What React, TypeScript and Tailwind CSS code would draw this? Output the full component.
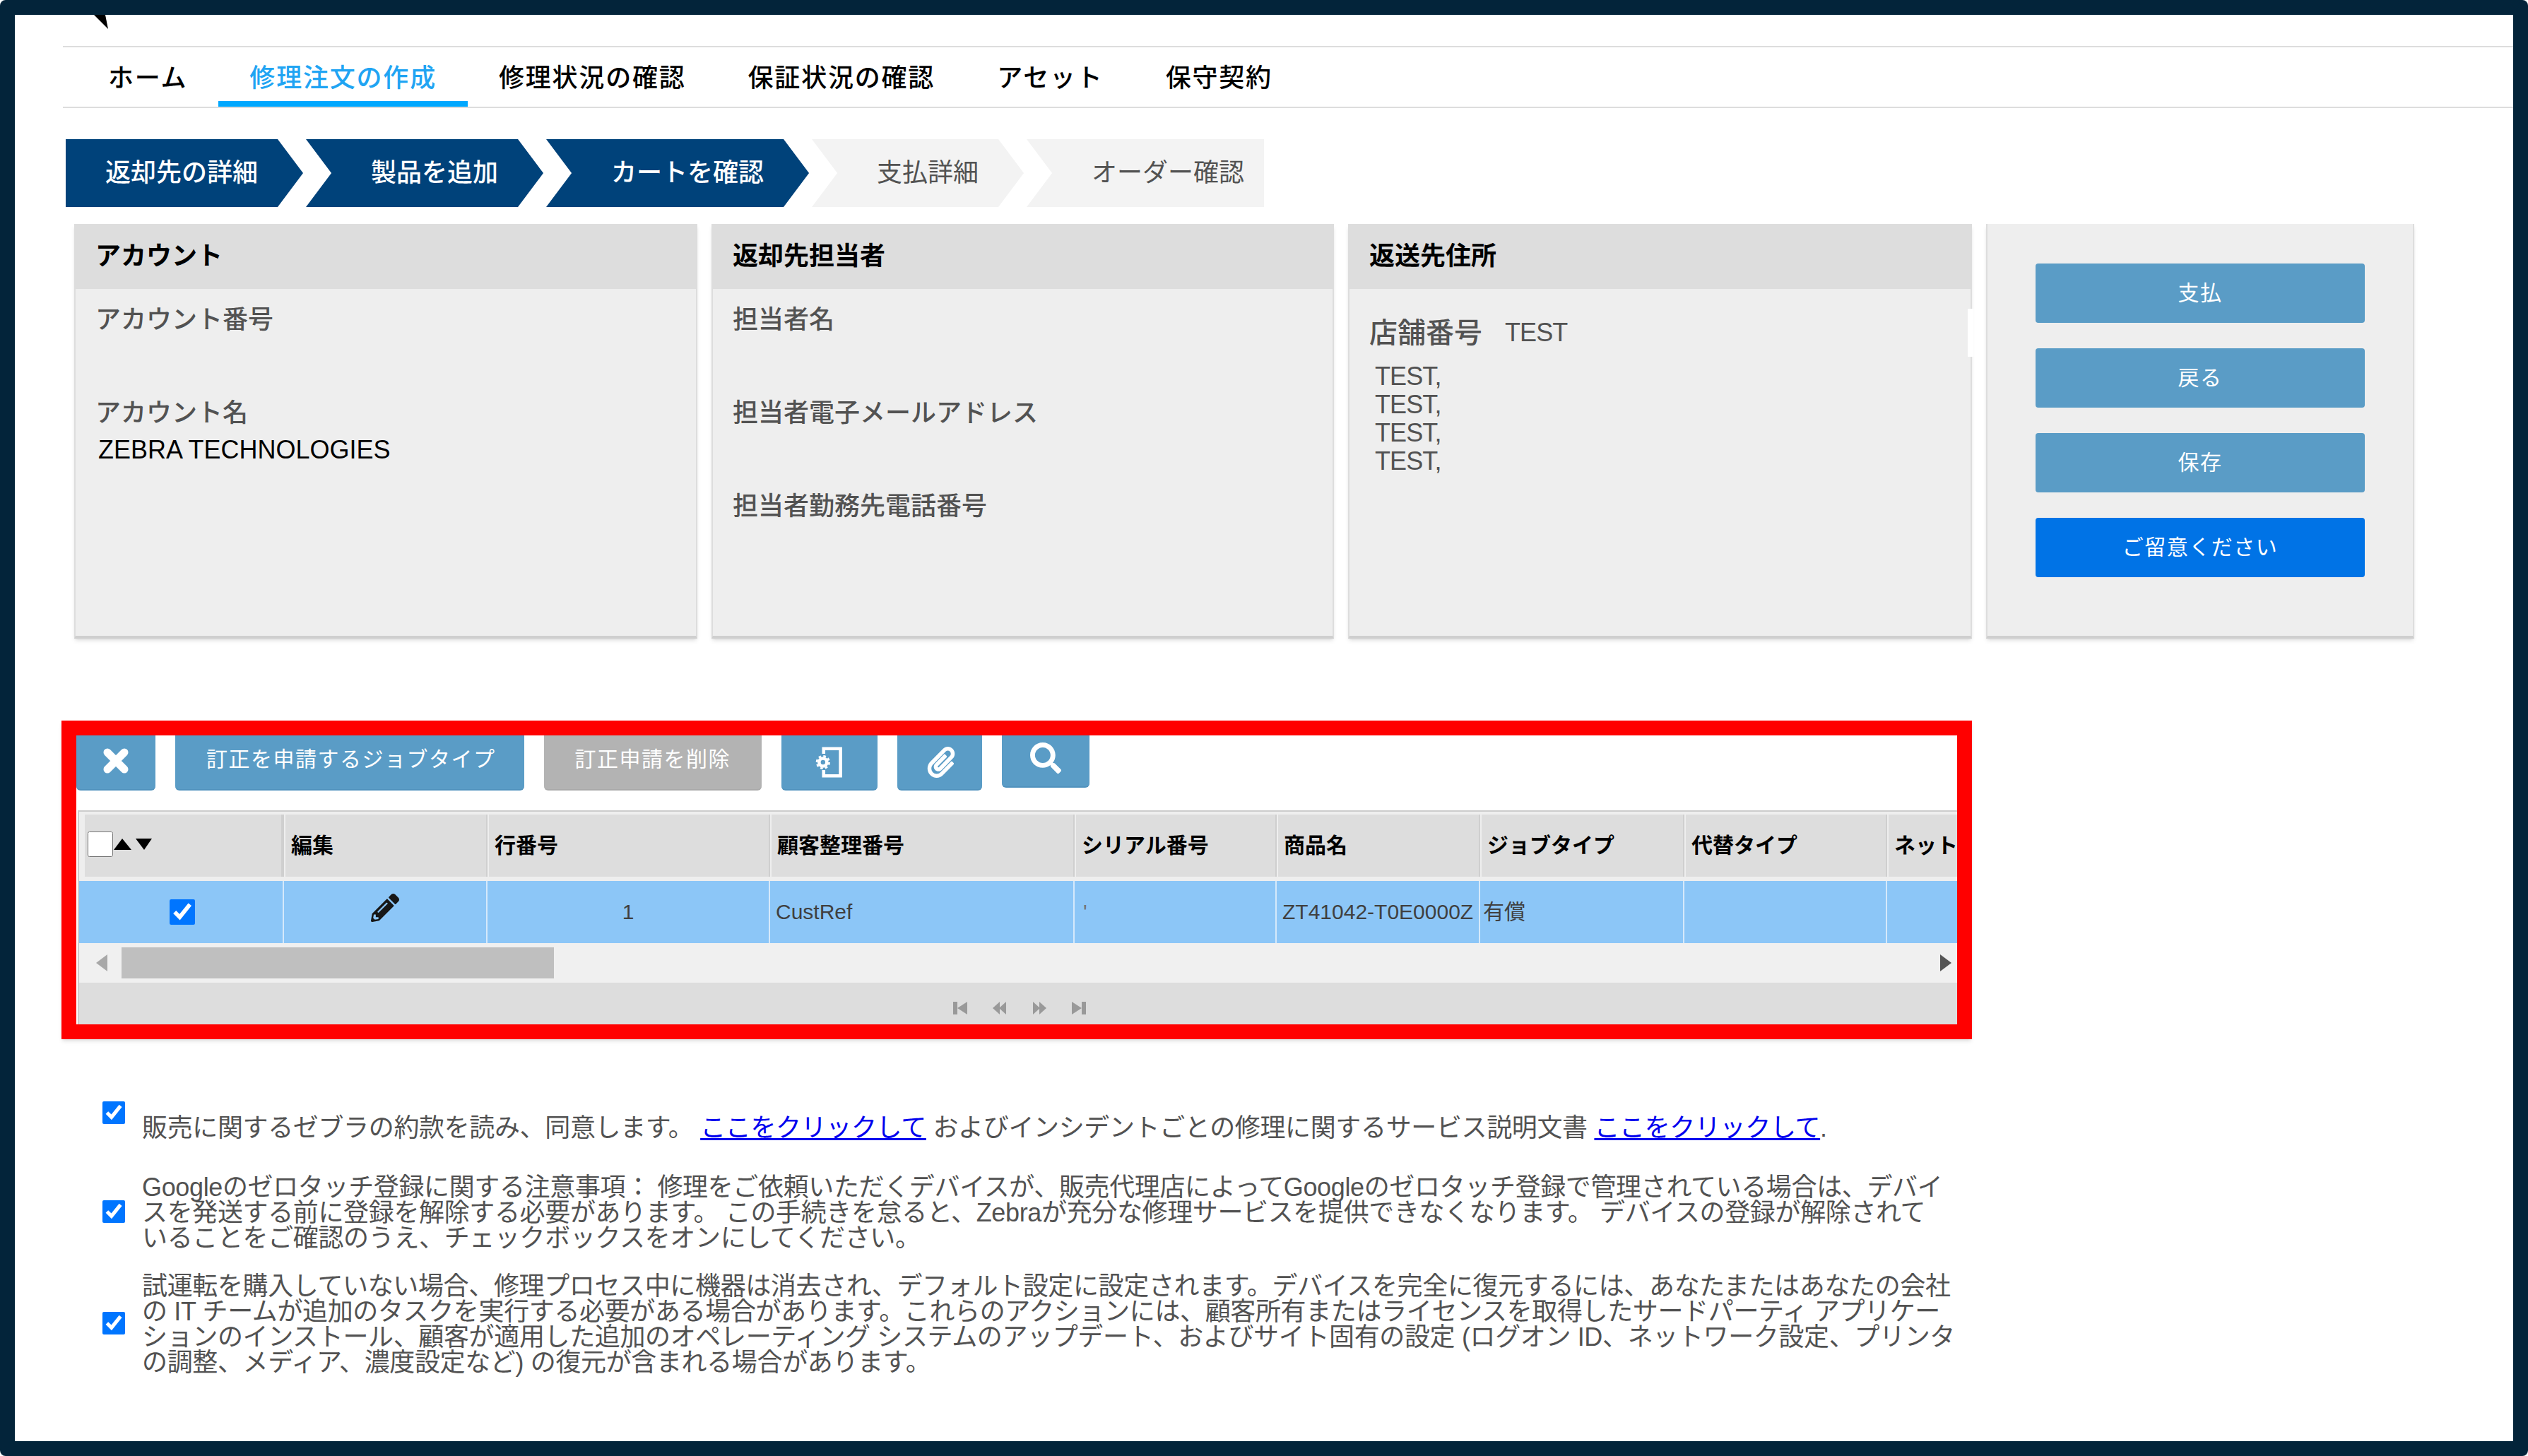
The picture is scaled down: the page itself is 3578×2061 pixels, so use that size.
import React from "react";
import { FaPaperclip, FaSearch, FaPencilAlt } from "react-icons/fa";

const NAV_ITEMS = [
  { label: "ホーム" },
  { label: "修理注文の作成", active: true },
  { label: "修理状況の確認" },
  { label: "保証状況の確認" },
  { label: "アセット" },
  { label: "保守契約" },
];

const CHEVRON =
  "[clip-path:polygon(0_0,calc(100%-36px)_0,100%_50%,calc(100%-36px)_100%,0_100%,36px_50%)]";

const COLS = "grid grid-cols-[286px_288px_400px_431px_286px_288px_289px_287px_288px]";

const HEADERS = ["編集", "行番号", "顧客整理番号", "シリアル番号", "商品名", "ジョブタイプ", "代替タイプ", "ネット"];

function Check({ checked = false, className = "w-9 h-9" }: { checked?: boolean; className?: string }) {
  return <input type="checkbox" readOnly checked={checked} className={"shrink-0 accent-[#0075ff] " + className} />;
}

function Field({ label, value }: { label: string; value?: string }) {
  return (
    <div className="mb-10">
      <div className="text-4xl leading-10 font-medium text-neutral-600">{label}</div>
      <div className="mt-3 ml-1 min-h-10 text-4xl leading-10 text-black">{value}</div>
    </div>
  );
}

function Card({ title, children }: { title: string; children: React.ReactNode }) {
  return (
    <div className="relative bg-[#eeeeee] border-x-2 border-b-4 border-x-[#dddddd] border-b-[#cfcfcf] shadow-md">
      <div className="bg-[#dddddd] px-7 py-6 text-4xl leading-11 font-bold text-black">{title}</div>
      {children}
    </div>
  );
}

function SideButton({ label, blue = false }: { label: string; blue?: boolean }) {
  return (
    <button
      className={
        "rounded-sm py-6 text-3xl leading-9 tracking-wider text-white " + (blue ? "bg-[#0073e6]" : "bg-[#5a9cc6]")
      }
    >
      {label}
    </button>
  );
}

function PagerIcon({ points, bar }: { points: string[]; bar?: string }) {
  return (
    <svg viewBox="0 0 20 20" className="w-5 h-5 fill-[#999999]">
      {bar && <rect x={bar} y="1" width="6" height="18" />}
      {points.map((p) => (
        <polygon key={p} points={p} />
      ))}
    </svg>
  );
}

export default function App() {
  return (
    <div className="h-screen w-screen overflow-hidden rounded-lg border-[21px] border-[#03243a] bg-white text-black [font-family:'Liberation_Sans','Noto_Sans_CJK_JP',sans-serif]">
      {/* cut-off logo corner */}
      <div className="h-11 pl-28">
        <svg viewBox="0 0 20 20" className="w-5 h-5 fill-black">
          <polygon points="0,0 16,0 20,20" />
        </svg>
      </div>

      <div className="pl-16">
        {/* Tabs */}
        <nav className="ml-1 flex items-end h-22 pl-5 border-y-2 border-[#dddddd]">
          {NAV_ITEMS.map((item) => (
            <a
              key={item.label}
              className={
                "px-11 pb-3 text-4xl leading-10 tracking-wider font-medium border-b-8 " +
                (item.active ? "text-[#20a4f3] border-[#00a8ff]" : "border-transparent")
              }
            >
              {item.label}
            </a>
          ))}
        </nav>

        {/* Steps */}
        <div className="mt-11 pl-2 flex gap-1 h-24 text-4xl font-medium">
          <div className="flex items-center pl-14 pr-16 bg-[#00427a] text-white [clip-path:polygon(0_0,calc(100%-36px)_0,100%_50%,calc(100%-36px)_100%,0_100%)]">
            返却先の詳細
          </div>
          <div className={"flex items-center pl-23 pr-16 bg-[#00427a] text-white " + CHEVRON}>製品を追加</div>
          <div className={"flex items-center pl-23 pr-16 bg-[#00427a] text-white " + CHEVRON}>カートを確認</div>
          <div className={"flex items-center pl-23 pr-16 bg-[#f3f3f3] text-neutral-600 font-normal " + CHEVRON}>支払詳細</div>
          <div className="flex items-center pl-23 pr-7 bg-[#f3f3f3] text-neutral-600 font-normal [clip-path:polygon(0_0,100%_0,100%_100%,0_100%,36px_50%)]">
            オーダー確認
          </div>
        </div>

        {/* Summary cards */}
        <div className="mt-6 pl-5 grid grid-cols-[882px_881px_883px_606px] gap-5 h-[587px]">
          <Card title="アカウント">
            <div className="px-7 pt-6">
              <Field label="アカウント番号" />
              <Field label="アカウント名" value="ZEBRA TECHNOLOGIES" />
            </div>
          </Card>
          <Card title="返却先担当者">
            <div className="px-7 pt-6">
              <Field label="担当者名" />
              <Field label="担当者電子メールアドレス" />
              <Field label="担当者勤務先電話番号" />
            </div>
          </Card>
          <Card title="返送先住所">
            <div className="absolute -right-1 top-30 h-17 w-2 bg-white" />
            <div className="px-7 pt-10 text-neutral-600">
              <div className="flex items-center gap-8">
                <span className="text-[40px] leading-11 font-medium">店舗番号</span>
                <span className="text-4xl tracking-tight">TEST</span>
              </div>
              <div className="mt-5 ml-2 text-4xl leading-10 tracking-tight">
                <div>TEST,</div>
                <div>TEST,</div>
                <div>TEST,</div>
                <div>TEST,</div>
              </div>
            </div>
          </Card>
          <div className="bg-[#eeeeee] border-x-2 border-b-4 border-x-[#dddddd] border-b-[#cfcfcf] shadow-md px-17 pt-14 flex flex-col gap-9">
            <SideButton label="支払" />
            <SideButton label="戻る" />
            <SideButton label="保存" />
            <SideButton label="ご留意ください" blue />
          </div>
        </div>

        {/* Highlighted job grid */}
        <div className="mt-29 ml-0.5 w-[2704px] h-[451px] border-[21px] border-[#ff0000] shadow-md flex flex-col overflow-hidden">
          <div className="flex gap-7 text-3xl leading-9 tracking-wider text-white">
            <button className="flex items-center px-9 pb-1 rounded-b-md bg-[#5a9cc6] border-b-2 border-[#5092bd]">
              <svg viewBox="0 0 40 40" className="w-10 h-10 stroke-white" strokeWidth="11" strokeLinecap="round">
                <path d="M8 8L32 32M32 8L8 32" />
              </svg>
            </button>
            <button className="pl-11 pr-10 pt-4 pb-6 rounded-b-md bg-[#5a9cc6] border-b-2 border-[#5092bd]">訂正を申請するジョブタイプ</button>
            <button className="px-11 pt-4 pb-6 rounded-b-md bg-[#b3b3b3] border-b-2 border-[#a9a9a9]">訂正申請を削除</button>
            <button className="flex items-center px-12 rounded-b-md bg-[#5a9cc6] border-b-2 border-[#5092bd]">
              <svg viewBox="0 0 42 48" className="w-10 h-11 fill-none stroke-white">
                <path d="M12 11V3H38V45H12V36" strokeWidth="5" />
                <circle cx="11" cy="24" r="6" strokeWidth="5" />
                <circle cx="11" cy="24" r="9.5" strokeWidth="3" strokeDasharray="4 3.5" />
              </svg>
            </button>
            <button className="flex items-center pl-10 pr-9 rounded-b-md bg-[#5a9cc6] border-b-2 border-[#5092bd]">
              <FaPaperclip className="w-11 h-11" />
            </button>
            <button className="flex items-center mb-1 px-10 pb-2 rounded-b-md bg-[#5a9cc6] border-b-2 border-[#5092bd]">
              <FaSearch className="w-11 h-11" />
            </button>
          </div>

          <div className="mt-7 ml-0.5 flex-1 flex flex-col overflow-hidden border-l-2 border-t-2 border-[#cccccc] bg-[#eeeeee]">
            <div className="pl-1 pt-1 pb-1.5">
              <div className={COLS + " text-3xl leading-10 font-bold"}>
                <div className="ml-1 flex items-center pl-1 pb-1 bg-[#dddddd] border-r-4 border-[#cfcfcf]">
                  <Check />
                  <svg viewBox="0 0 54 16" className="w-14 h-4 fill-black">
                    <polygon points="0,16 12,0 25,16" />
                    <polygon points="31,0 54,0 43,16" />
                  </svg>
                </div>
                {HEADERS.map((h) => (
                  <div key={h} className="ml-0.5 px-2 py-6 bg-[#dddddd] border-r-2 border-[#cfcfcf] whitespace-nowrap overflow-hidden">
                    {h}
                  </div>
                ))}
              </div>
            </div>
            <div className="pl-1 bg-[#8cc6f7]">
              <div className={COLS + " text-3xl leading-10 text-neutral-700"}>
                <div className="flex items-center justify-center border-r-2 border-[#d5e9fb]">
                  <Check checked />
                </div>
                <div className="flex items-center justify-center border-r-2 border-[#d5e9fb]">
                  <FaPencilAlt className="w-10 h-10 mb-3 text-neutral-900" />
                </div>
                <div className="py-6 text-center border-r-2 border-[#d5e9fb]">1</div>
                <div className="py-6 pl-2 border-r-2 border-[#d5e9fb]">CustRef</div>
                <div className="py-6 pl-3 border-r-2 border-[#d5e9fb] text-neutral-500">'</div>
                <div className="py-6 pl-2 border-r-2 border-[#d5e9fb] whitespace-nowrap">ZT41042-T0E0000Z</div>
                <div className="py-6 pl-1 border-r-2 border-[#d5e9fb]">有償</div>
                <div className="border-r-2 border-[#d5e9fb]" />
                <div />
              </div>
            </div>
            {/* Horizontal scrollbar */}
            <div className="h-14 flex items-center gap-5 pl-6 pr-2 bg-[#f0f0f0]">
              <svg viewBox="0 0 16 24" className="w-4 h-6 fill-[#a8a8a8]">
                <polygon points="16,0 16,24 0,12" />
              </svg>
              <div className="w-[612px] h-11 bg-[#bfbfbf]" />
              <svg viewBox="0 0 16 24" className="ml-auto w-4 h-6 fill-[#555555]">
                <polygon points="0,0 0,24 16,12" />
              </svg>
            </div>
            <div className="flex-1 flex justify-center items-center gap-9 pt-3 pl-1 bg-[#dddddd]">
              <PagerIcon bar="0" points={["6,10 20,1 20,19"]} />
              <PagerIcon points={["0,10 10,1 10,19", "9,10 19,1 19,19"]} />
              <PagerIcon points={["1,1 11,10 1,19", "10,1 20,10 10,19"]} />
              <PagerIcon bar="14" points={["0,1 14,10 0,19"]} />
            </div>
          </div>
        </div>

        {/* Agreements */}
        <div className="mt-22 pl-15 text-4xl leading-9 tracking-[-0.01em] text-neutral-600 whitespace-nowrap">
          <div className="flex gap-6">
            <Check checked className="w-8 h-8" />
            <p className="pt-5">
              販売に関するゼブラの約款を読み、同意します。{" "}
              <a className="text-[#0000ee] underline">ここをクリックして</a> およびインシデントごとの修理に関するサービス説明文書{" "}
              <a className="text-[#0000ee] underline">ここをクリックして</a>.
            </p>
          </div>
          <div className="mt-12 flex items-center gap-6">
            <Check checked className="w-8 h-8 mb-1" />
            <p>
              Googleのゼロタッチ登録に関する注意事項： 修理をご依頼いただくデバイスが、販売代理店によってGoogleのゼロタッチ登録で管理されている場合は、デバイ
              <br />
              スを発送する前に登録を解除する必要があります。 この手続きを怠ると、Zebraが充分な修理サービスを提供できなくなります。 デバイスの登録が解除されて
              <br />
              いることをご確認のうえ、チェックボックスをオンにしてください。
            </p>
          </div>
          <div className="mt-8 flex items-center gap-6">
            <Check checked className="w-8 h-8 mb-1" />
            <p>
              試運転を購入していない場合、修理プロセス中に機器は消去され、デフォルト設定に設定されます。デバイスを完全に復元するには、あなたまたはあなたの会社
              <br />
              の IT チームが追加のタスクを実行する必要がある場合があります。これらのアクションには、顧客所有またはライセンスを取得したサードパーティ アプリケー
              <br />
              ションのインストール、顧客が適用した追加のオペレーティング システムのアップデート、およびサイト固有の設定 (ログオン ID、ネットワーク設定、プリンタ
              <br />
              の調整、メディア、濃度設定など) の復元が含まれる場合があります。
            </p>
          </div>
        </div>
      </div>
    </div>
  );
}
